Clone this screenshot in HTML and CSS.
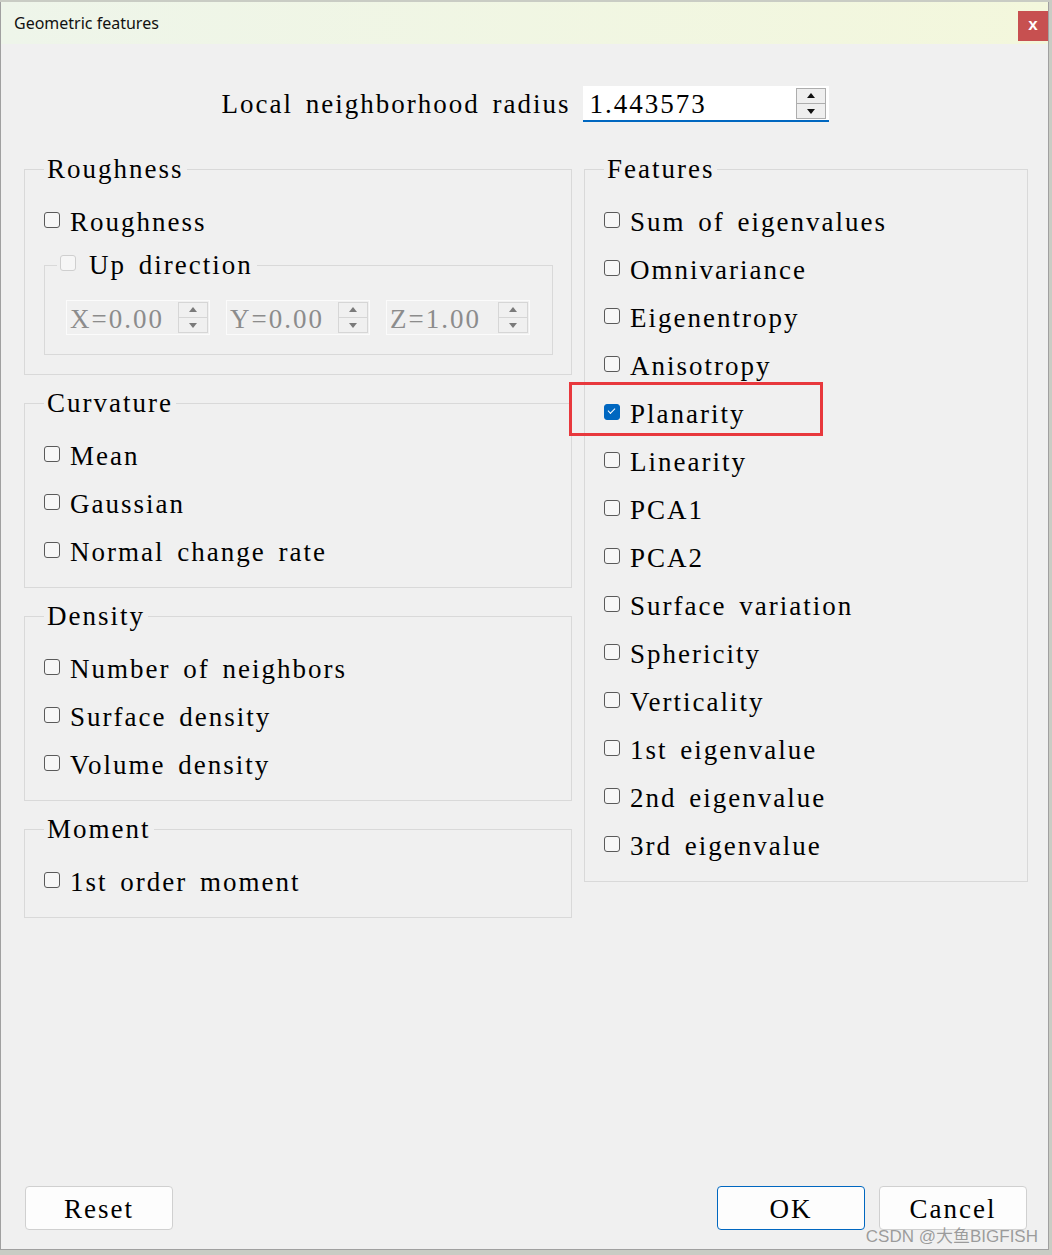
FILE: index.html
```html
<!DOCTYPE html>
<html lang="en">
<head>
    <meta charset="UTF-8">
    <title>Geometric features</title>
    <link rel="stylesheet" href="styles.css">
</head>
<body>
    <div class="window">
        <div class="titlebar">
            <span class="title">Geometric features</span>
            <span class="close">x</span>
        </div>

        <div class="radius-row">
            <span class="radius-label">Local neighborhood radius</span>
            <div class="num-input">
                <span class="num-value">1.443573</span>
                <span class="spin"><span class="up"></span><span class="down"></span></span>
            </div>
        </div>

        <div class="columns">
            <div class="col-left">
                <fieldset class="group rough">
                    <legend>Roughness</legend>
                    <div class="row"><span class="box"></span>Roughness</div>
                    <fieldset class="subgroup">
                        <legend><span class="box off"></span>Up direction</legend>
                        <div class="vec-row">
                            <div class="small-spin"><span class="sval">X=0.00</span><span class="spin dim"><span class="up"></span><span class="down"></span></span></div>
                            <div class="small-spin"><span class="sval">Y=0.00</span><span class="spin dim"><span class="up"></span><span class="down"></span></span></div>
                            <div class="small-spin"><span class="sval">Z=1.00</span><span class="spin dim"><span class="up"></span><span class="down"></span></span></div>
                        </div>
                    </fieldset>
                </fieldset>

                <fieldset class="group">
                    <legend>Curvature</legend>
                    <div class="row"><span class="box"></span>Mean</div>
                    <div class="row"><span class="box"></span>Gaussian</div>
                    <div class="row"><span class="box"></span>Normal change rate</div>
                </fieldset>

                <fieldset class="group">
                    <legend>Density</legend>
                    <div class="row"><span class="box"></span>Number of neighbors</div>
                    <div class="row"><span class="box"></span>Surface density</div>
                    <div class="row"><span class="box"></span>Volume density</div>
                </fieldset>

                <fieldset class="group">
                    <legend>Moment</legend>
                    <div class="row"><span class="box"></span>1st order moment</div>
                </fieldset>
            </div>

            <div class="col-right">
                <fieldset class="group">
                    <legend>Features</legend>
                    <div class="row"><span class="box"></span>Sum of eigenvalues</div>
                    <div class="row"><span class="box"></span>Omnivariance</div>
                    <div class="row"><span class="box"></span>Eigenentropy</div>
                    <div class="row"><span class="box"></span>Anisotropy</div>
                    <div class="row marked"><span class="box on"></span>Planarity<span class="highlight"></span></div>
                    <div class="row"><span class="box"></span>Linearity</div>
                    <div class="row"><span class="box"></span>PCA1</div>
                    <div class="row"><span class="box"></span>PCA2</div>
                    <div class="row"><span class="box"></span>Surface variation</div>
                    <div class="row"><span class="box"></span>Sphericity</div>
                    <div class="row"><span class="box"></span>Verticality</div>
                    <div class="row"><span class="box"></span>1st eigenvalue</div>
                    <div class="row"><span class="box"></span>2nd eigenvalue</div>
                    <div class="row"><span class="box"></span>3rd eigenvalue</div>
                </fieldset>
            </div>
        </div>

        <div class="footer">
            <button class="btn">Reset</button>
            <span class="spacer"></span>
            <button class="btn default">OK</button>
            <button class="btn">Cancel</button>
        </div>

        <span class="watermark">CSDN @大鱼BIGFISH</span>
    </div>
</body>
</html>
```

FILE: styles.css
```css
body {
    margin: 0;
    background: #c9ccc4;
    font-family: "Liberation Serif", serif;
    overflow: hidden;
}
.window {
    position: relative;
    box-sizing: border-box;
    width: 1049px;
    height: 1248px;
    margin-top: 2px;
    background: #f0f0f0;
    border: 1px solid #a0a0a0;
    border-top: none;
    display: flex;
    flex-direction: column;
}
.titlebar {
    height: 42px;
    display: flex;
    background: linear-gradient(90deg, #eef5ea, #f3f7dc);
}
.title {
    font-family: "Noto Sans", sans-serif;
    font-size: 16px;
    line-height: 42px;
    padding-left: 13px;
    color: #111;
}
.close {
    margin-left: auto;
    margin-top: 9px;
    width: 30px;
    height: 30px;
    background: #c75050;
    color: #fff;
    font-family: "Liberation Sans", sans-serif;
    font-weight: bold;
    font-size: 17px;
    line-height: 28px;
    text-align: center;
}

/* radius row */
.radius-row {
    margin-top: 42px;
    display: flex;
    justify-content: center;
    align-items: center;
    gap: 13px;
    padding-left: 2px;
}
.radius-label, .row, legend, .btn, .num-value, .sval {
    font-family: "Liberation Serif", serif;
    font-size: 27px;
    letter-spacing: 2px;
    word-spacing: 4px;
    color: #000;
}
.num-input {
    position: relative;
    box-sizing: border-box;
    width: 246px;
    height: 36px;
    background: #fff;
    border-bottom: 2px solid #0067c0;
    display: flex;
    align-items: center;
}
.num-value {
    padding-left: 6px;
    padding-top: 3px;
}
.spin {
    position: absolute;
    right: 3px;
    top: 2px;
    width: 30px;
    display: flex;
    flex-direction: column;
}
.spin span {
    position: relative;
    height: 14px;
    background: #efefef;
    border: 1px solid #adadad;
}
.spin .down {
    border-top: none;
}
.spin span::after {
    content: "";
    position: absolute;
    left: 50%;
    top: 50%;
    margin-left: -4px;
    border-left: 4px solid transparent;
    border-right: 4px solid transparent;
}
.spin .up::after {
    margin-top: -3px;
    border-bottom: 5px solid #111;
}
.spin .down::after {
    margin-top: -2px;
    border-top: 5px solid #111;
}

/* groups */
.columns {
    display: flex;
    gap: 12px;
    margin-top: 33px;
    padding-left: 23px;
    align-items: flex-start;
}
.col-left {
    width: 548px;
    display: flex;
    flex-direction: column;
    gap: 14px;
}
.col-right {
    width: 444px;
}
fieldset {
    margin: 0;
    min-width: 0;
    border: 1px solid #d9d9d9;
}
.group {
    padding: 14px 18px 12px 19px;
}
.group.rough {
    padding-bottom: 19px;
}
legend {
    padding: 0 3px;
    line-height: 28px;
    height: 28px;
}
.row {
    position: relative;
    height: 48px;
    display: flex;
    align-items: center;
    padding-top: 2px;
    box-sizing: border-box;
}
.box {
    box-sizing: border-box;
    width: 16px;
    height: 16px;
    border: 1px solid #5a5a5a;
    border-radius: 3px;
    background: #f7f7f7;
    margin-right: 10px;
    margin-top: -4px;
    flex-shrink: 0;
}
.box.on {
    background: #0067c0;
    border-color: #0067c0;
    position: relative;
}
.box.on::after {
    content: "";
    position: absolute;
    left: 3px;
    top: 3px;
    width: 6px;
    height: 3px;
    border-left: 1.5px solid #fff;
    border-bottom: 1.5px solid #fff;
    transform: rotate(-45deg);
}
.box.off {
    border-color: #cfcfcf;
    background: #f6f6f6;
}
.highlight {
    position: absolute;
    left: -35px;
    top: -7px;
    width: 254px;
    height: 54px;
    box-sizing: border-box;
    border: 3px solid #e8383d;
}

/* up direction */
.subgroup {
    margin-top: 6px;
    padding: 21px 20px 19px 21px;
}
.subgroup legend {
    display: flex;
    align-items: center;
    margin-left: -9px;
    padding: 0 4px 0 3px;
}
.subgroup .box {
    margin-right: 13px;
}
.vec-row {
    display: flex;
    gap: 16px;
}
.small-spin {
    position: relative;
    box-sizing: border-box;
    width: 144px;
    height: 35px;
    background: #f0f0f0;
    border: 1px solid #fbfbfb;
    display: flex;
    align-items: center;
}
.sval {
    color: #8c8c8c;
    padding-left: 3px;
    padding-top: 3px;
}
.spin.dim {
    top: 1px;
    right: 1px;
}
.spin.dim span {
    border-color: #d6d6d6;
    background: #f0f0f0;
}
.spin.dim .up::after {
    border-bottom-color: #7a7a7a;
}
.spin.dim .down::after {
    border-top-color: #7a7a7a;
}

/* buttons */
.footer {
    margin-top: auto;
    display: flex;
    gap: 14px;
    padding: 0 21px 19px 24px;
}
.spacer {
    flex: 1;
}
.btn {
    width: 148px;
    height: 44px;
    background: #fdfdfd;
    border: 1px solid #d0d0d0;
    border-radius: 4px;
    padding: 2px 0 0;
}
.btn.default {
    border-color: #0067c0;
}
.watermark {
    position: absolute;
    right: 10px;
    bottom: 2px;
    font-family: "Liberation Sans", "Noto Sans CJK SC", sans-serif;
    font-size: 17px;
    color: rgba(140, 140, 140, 0.85);
}
```
